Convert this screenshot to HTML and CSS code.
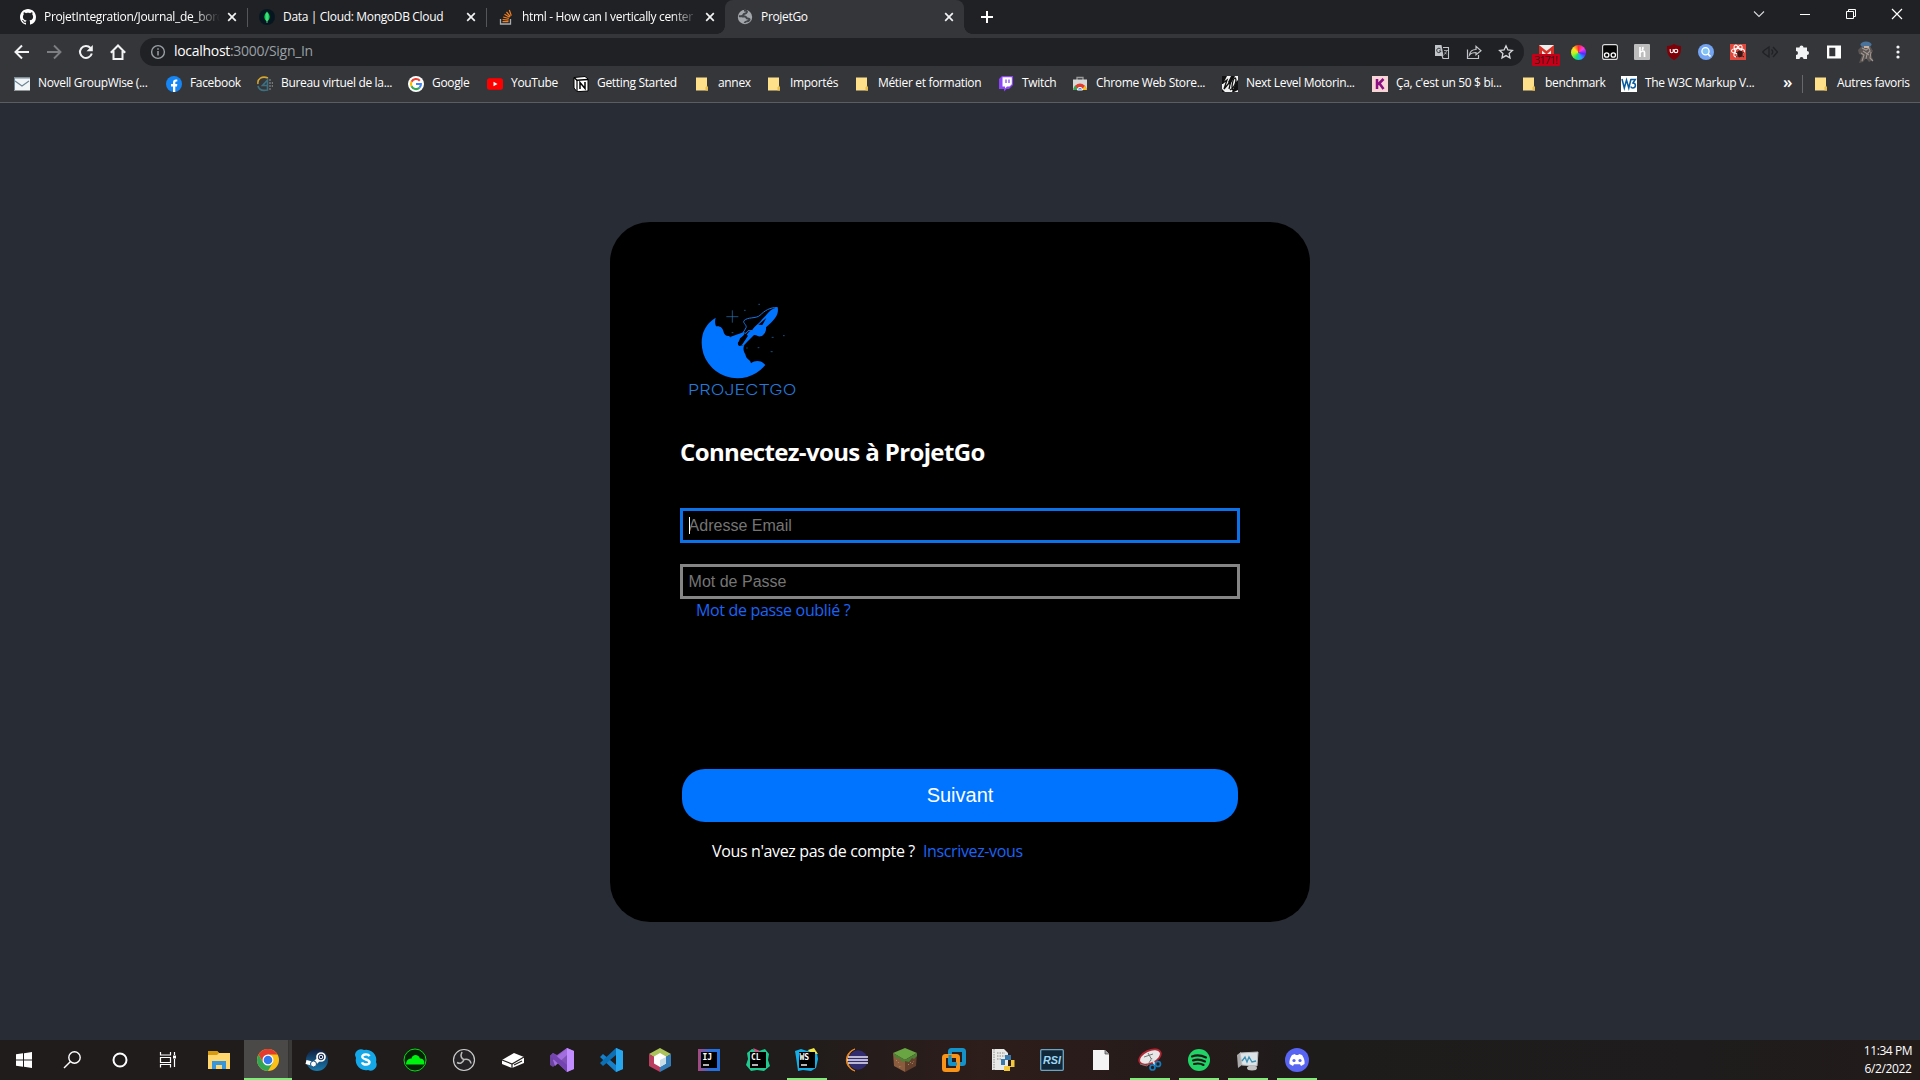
FILE: index.html
```html
<!DOCTYPE html>
<html lang="fr">
<head>
<meta charset="utf-8">
<title>ProjetGo</title>
<link rel="stylesheet" href="styles.css">
</head>
<body>
<svg class="defs" aria-hidden="true">
  <symbol id="close" viewBox="0 0 16 16"><path d="M4.2 4.2l7.6 7.6M11.800 4.200l-7.600 7.600" stroke="#f1f3f4" stroke-width="1.7"/></symbol>
  <symbol id="folder" viewBox="0 0 16 16"><path d="M2 1.500h11v9l1 1v3H2z" fill="#ffe08a"/><path d="M11.500 14.500v-3l1.500-2 1 2v3z" fill="#e8bd4c"/></symbol>
</svg>

<header class="browser">
  <div class="tabstrip">
    <div class="tab">
      <svg class="ico" viewBox="0 0 16 16"><path fill="#fff" d="M8 0C3.580 0 0 3.580 0 8c0 3.540 2.290 6.530 5.470 7.590.4.070.55-.17.55-.38 0-.19-.010-.82-.010-1.490-2.010.37-2.530-.49-2.690-.94-.090-.23-.48-.94-.82-1.130-.28-.15-.68-.52-.010-.53.63-.010 1.080.58 1.230.82.72 1.210 1.870.87 2.330.66.070-.52.28-.87.510-1.070-1.780-.2-3.640-.89-3.640-3.950 0-.87.31-1.590.82-2.150-.080-.2-.36-1.020.080-2.120 0 0 .67-.21 2.200.82.64-.18 1.320-.27 2-.27s1.360.090 2 .27c1.530-1.040 2.200-.82 2.200-.82.44 1.100.16 1.920.080 2.120.51.56.82 1.270.82 2.150 0 3.070-1.870 3.750-3.650 3.950.29.25.54.73.54 1.480 0 1.070-.010 1.930-.010 2.200 0 .21.15.46.55.38A8 8 0 0 0 16 8c0-4.420-3.580-8-8-8z"/></svg>
      <span class="tab-title fade">ProjetIntegration/Journal_de_bord</span><svg class="ico"><use href="#close"/></svg>
    </div>
    <div class="tab">
      <svg class="ico" viewBox="0 0 16 16"><circle cx="8" cy="8" r="8" fill="#061621"/><path d="M8 2.500c4 4 3 8 0 10-3-2-4-6 0-10z" fill="#10d35a"/><path d="M8 4v10" stroke="#9be8b4" stroke-width=".7"/></svg>
      <span class="tab-title">Data | Cloud: MongoDB Cloud</span><svg class="ico"><use href="#close"/></svg>
    </div>
    <div class="tab">
      <svg class="ico" viewBox="0 0 16 16"><path d="M2.500 10v5h10v-5" fill="none" stroke="#a9adb0" stroke-width="1.300"/><path d="M4.500 12.700h6M4.600 10.500l6 .6M5.200 8l5.600 1.500M6.500 5.300l5 3M8.500 3l3.800 4.500M11.300 1l2 5.600" stroke="#f48024" stroke-width="1.200"/></svg>
      <span class="tab-title fade">html - How can I vertically center</span><svg class="ico"><use href="#close"/></svg>
    </div>
    <div class="tab active">
      <svg class="ico" viewBox="0 0 16 16"><circle cx="8" cy="8" r="7.200" fill="#a3a6aa"/><path d="M7 1.500c5 0 3 3 0 3.500-1 1-1 1.500-2 2-1 .3-2 .3-3 0M5 7.500h3c1.500 0 1 2 2.500 2s3 .5 1.500 2-3.500 0-4.500 2.500" fill="none" stroke="#43464a" stroke-width="1.900"/></svg>
      <span class="tab-title">ProjetGo</span><svg class="ico"><use href="#close"/></svg>
    </div>
    <svg class="newtab" viewBox="0 0 16 16"><path d="M8 2v12M2 8h12" stroke="#fff" stroke-width="2"/></svg>
    <div class="winctl">
      <svg viewBox="0 0 16 16"><path d="M3 5.500l5 5 5-5" fill="none" stroke="#d8dadd" stroke-width="1.100"/></svg>
      <svg viewBox="0 0 16 16"><path d="M3 8.500h10" stroke="#fff"/></svg>
      <svg viewBox="0 0 16 16"><path d="M3.500 5.500h7v7h-7zM5.500 5.500v-2h7v7h-2" fill="none" stroke="#fff"/></svg>
      <svg viewBox="0 0 16 16"><path d="M3 3l10 10M13 3L3 13" stroke="#fff" stroke-width="1.200"/></svg>
    </div>
  </div>

  <div class="toolbar">
    <div class="nav">
      <svg viewBox="0 0 16 16"><path d="M15 8H2M8 1.500L1.500 8 8 14.500" fill="none" stroke="#f1f3f4" stroke-width="2"/></svg>
      <svg viewBox="0 0 16 16"><path d="M1 8h13M8 1.500L14.500 8 8 14.500" fill="none" stroke="#7c7e81" stroke-width="1.900"/></svg>
      <svg viewBox="0 0 16 16"><path d="M13.800 9.500A6 6 0 1 1 12.500 4" fill="none" stroke="#f1f3f4" stroke-width="2"/><path d="M14.800 1v6.300H8.500z" fill="#f1f3f4"/></svg>
      <svg viewBox="0 0 16 16"><path d="M.8 8.800L8 1.500l7.200 7.300M3.500 7v8h9V7" fill="none" stroke="#f1f3f4" stroke-width="2"/></svg>
    </div>
    <div class="omnibox">
      <svg class="ico" viewBox="0 0 16 16"><circle cx="8" cy="8" r="6.400" fill="none" stroke="#9aa0a6" stroke-width="1.400"/><path d="M8 7v4.500M8 4.300v1.500" stroke="#9aa0a6" stroke-width="1.500"/></svg>
      <span class="url"><b>localhost</b>:3000/Sign_In</span>
      <div class="omni-icons">
        <svg viewBox="0 0 16 16"><path d="M1 1h6.500l2 11H1z" fill="#c1c4c8"/><path d="M9 3.500h5.500v11H9l-1-3" fill="none" stroke="#c1c4c8" stroke-width="1.100"/><path d="M6.700 5.200A2.200 2.200 0 1 0 7 7H5" fill="none" stroke="#35363a"/><path d="M10 6.500h4M12.500 7c-.5 2-1.500 3-2.500 3.500M10.800 8.300l1.700 2" stroke="#c1c4c8" fill="none" stroke-width=".8"/></svg>
        <svg viewBox="0 0 16 16"><path d="M1.500 5.500v9h11V11M3.500 11c.5-4 3-5.500 6.500-5.500V2.300L15 6.800l-5 4V8.500c-3 0-5 .5-6.500 2.500z" fill="none" stroke="#c1c4c8" stroke-width="1.200"/></svg>
        <svg viewBox="0 0 16 16"><path d="M8 1.800l1.900 4.100 4.500.5-3.300 3 .9 4.500-4-2.300-4 2.300.9-4.500-3.300-3 4.500-.5z" fill="none" stroke="#d6d8db" stroke-width="1.300"/></svg>
      </div>
    </div>
    <div class="extensions">
      <svg class="gmail" viewBox="0 0 28 22"><path d="M7 1h15v10H7z" fill="#eee"/><path d="M7 11V1l7.500 6L22 1v10h-3V6.500l-4.500 4L10 6.500V11z" fill="#d93025"/><rect y="10" width="28" height="12" rx="1" fill="#c60018"/><text x="14" y="20" font-size="11" text-anchor="middle" textLength="24" fill="#3e1015">3171!</text></svg>
      <i class="wheel"></i>
      <svg viewBox="0 0 16 16"><rect x=".6" y=".6" width="14.800" height="14.800" rx="2" fill="#050505" stroke="#ddd" stroke-width="1.100"/><circle cx="4.700" cy="11" r="2.200" fill="none" stroke="#fff" stroke-width="1.300"/><circle cx="11.300" cy="11" r="2.200" fill="none" stroke="#fff" stroke-width="1.300"/></svg>
      <svg viewBox="0 0 16 16"><rect width="16" height="16" rx="1" fill="#bdbdbd"/><path d="M6 3v10M6 8.500c2.500-2 4.500-2 4.500 0V13M8.500 3c.8 1 .5 2-.5 3" fill="none" stroke="#fff" stroke-width="1.700"/></svg>
      <svg viewBox="0 0 16 16"><path d="M8 0c2 1.300 4 2 7 2 .3 7-1 11-7 14C2 13 .7 9 1 2c3 0 5-.7 7-2z" fill="#800008"/><path d="M4.200 5v2.200c0 2 3 2 3 0V5M10 5.200a1.800 1.700 0 1 1 0 3.400 1.800 1.700 0 0 1 0-3.400z" fill="none" stroke="#fff" stroke-width="1.100"/></svg>
      <svg viewBox="0 0 16 16"><circle cx="8" cy="8" r="8" fill="#73a5f4"/><circle cx="7.500" cy="7.200" r="3.600" fill="#82c5f5" stroke="#fff" stroke-width="1.300"/><path d="M10 10l2.500 2.500" stroke="#fff" stroke-width="1.700"/></svg>
      <svg viewBox="0 0 16 16"><rect width="16" height="16" fill="#e0493c"/><g fill="none" stroke="#fff" stroke-width="1.100"><ellipse cx="8" cy="7" rx="6.500" ry="2.500"/><ellipse cx="8" cy="7" rx="6.500" ry="2.500" transform="rotate(60 8 7)"/><ellipse cx="8" cy="7" rx="6.500" ry="2.500" transform="rotate(120 8 7)"/></g><ellipse cx="10" cy="10" rx="2.800" ry="3.400" fill="#3a1513"/><path d="M6 8l8 5M14 8l-8 5" stroke="#3a1513"/></svg>
      <svg viewBox="0 0 16 16"><path d="M.7 8l2-2L7 3v10L2.700 10z" fill="none" stroke="#202124" stroke-width="1.300"/><path d="M9.500 5.500c1.500 1.500 1.500 3.500 0 5M11 3l4.500 5-4.500 5" fill="none" stroke="#202124" stroke-width="1.300"/></svg>
      <svg viewBox="0 0 16 16"><path d="M2 3.500h3.500a2 2 0 1 1 4 0H13V7a2 2 0 1 1 0 4v4H9.500a2 2 0 0 0-4 0H2v-4a2 2 0 0 0 0-4z" fill="#f1f3f4"/></svg>
      <svg viewBox="0 0 16 16"><path d="M1 1.500h14v13H1zM3.300 3.800v8.400h6V3.800z" fill="#fff" fill-rule="evenodd"/></svg>
      <svg class="avatar" viewBox="0 0 20 22"><path d="M2 9l4-4h8l3 5-2 3 2 6-4 2-3-4-3 4-4 1 3-8-3-1z" fill="#5a5553"/><ellipse cx="10" cy="3.500" rx="5.500" ry="3" fill="#49739b"/><path d="M6 7l4 2 3-2 1 3-3 3-1 5M5 12l3 2-2 6M15 11l-1 6 3 3M7 10l6 4" stroke="#a29791" fill="none" stroke-width="1.100"/><path d="M8 5h5v2H8z" fill="#c7b0a0"/></svg>
      <svg viewBox="0 0 16 16"><g fill="#f1f3f4"><circle cx="8" cy="3" r="1.600"/><circle cx="8" cy="8" r="1.600"/><circle cx="8" cy="13" r="1.600"/></g></svg>
    </div>
  </div>

  <nav class="bookmarks">
    <a><svg viewBox="0 0 16 16"><rect y="1.500" width="16" height="13" fill="#f2f5f7"/><path d="M1 5l7 5 7-5" fill="none" stroke="#6c8797" stroke-width="1.200"/><path d="M0 2h16M.5 2v12" stroke="#6c8797"/></svg><span>Novell GroupWise (...</span></a>
    <a><svg viewBox="0 0 16 16"><circle cx="8" cy="8" r="8" fill="#1686f5"/><path d="M7 16v-5.500H5V8h2V6.500C7 4 8.500 3 11.300 3.500v2C9.500 5.300 9.300 5.800 9.300 7v1h2L11 10.500H9.300V16z" fill="#fff"/></svg><span>Facebook</span></a>
    <a><svg viewBox="0 0 16 16"><path d="M1 8C0 3 5-.5 11 2" fill="none" stroke="#d6a72e" stroke-width="1.500"/><path d="M1 10c1 4 5 5 9.500 4V4L5.500 9.500H10" fill="none" stroke="#3d7182" stroke-width="1.600"/><path d="M13 3v11M15.500 6v5" stroke="#777" stroke-width="1.400" stroke-dasharray="2 1"/></svg><span>Bureau virtuel de la...</span></a>
    <a><svg viewBox="0 0 16 16"><circle cx="8" cy="8" r="8" fill="#fff"/><g fill="none" stroke-width="2.100"><path d="M11.800 4.700A5 5 0 0 0 3.500 5.800" stroke="#ea4335"/><path d="M3.500 5.800a5 5 0 0 0 0 4.500" stroke="#fbbc05"/><path d="M3.500 10.300a5 5 0 0 0 7.900 1.400" stroke="#34a853"/><path d="M11.400 11.700C12.500 10.700 13 9.300 12.900 8H8" stroke="#4285f4"/></g></svg><span>Google</span></a>
    <a><svg viewBox="0 0 16 16"><rect y="2.300" width="16" height="11.500" rx="2.500" fill="#f00"/><path d="M6.500 5.700v4.600L10.500 8z" fill="#fff"/></svg><span>YouTube</span></a>
    <a><svg viewBox="0 0 16 16"><path d="M1 1.500L12 .5l3 2.500v12l-11 .7L1 12z" fill="#fff" stroke="#000"/><path d="M1 1.500l3 2.700 11-.7" stroke="#000" stroke-width="1.400" fill="none"/><path d="M4 4v11.500" stroke="#000" stroke-width="1.200"/><path d="M7 13V6.500l5 6V6" fill="none" stroke="#000" stroke-width="1.500"/></svg><span>Getting Started</span></a>
    <a><svg><use href="#folder"/></svg><span>annex</span></a>
    <a><svg><use href="#folder"/></svg><span>Importés</span></a>
    <a><svg><use href="#folder"/></svg><span>Métier et formation</span></a>
    <a><svg viewBox="0 0 16 16"><path d="M4 0h11v9l-4 4H8.500L6 15.500V13H1V3z" fill="#8b45f7"/><path d="M4.500 1.200h9.300v7L11.500 10.500H9l-2 2v-2H4.500z" fill="#fff"/><path d="M8 3.500V7M11 3.500V7" stroke="#8b45f7" stroke-width="1.300"/></svg><span>Twitch</span></a>
    <a><svg viewBox="0 0 16 16"><path d="M5 4V1.500h6V4" fill="none" stroke="#9a9a9a" stroke-width="1.300"/><path d="M1 3.500h14v10.500H1z" fill="#d8d8d8"/><path d="M1.500 14a6.500 6.500 0 0 1 13 0z" fill="#e33b2e"/><path d="M1.500 14c0-2 .7-3.500 2-4.500l3 4.500z" fill="#31a552"/><path d="M14.500 14c0-2-1-3.500-2-4l-2.500 4z" fill="#fbc116"/><path d="M5.400 14a2.600 2.600 0 0 1 5.200 0z" fill="#4587ed" stroke="#fff"/></svg><span>Chrome Web Store...</span></a>
    <a><svg viewBox="0 0 16 16"><rect width="16" height="16" fill="#f2f2f2"/><path d="M0 0h5L1 8H0zM9 0h4L8 9 6 6zM14 6l2-2v10l-4 2h-2zM0 13l3 3H0z" fill="#111"/><path d="M1 7l4-3-3 9 5-6c2-2 1 2 0 6M8 14c6-3 7-12 5-12s-5 13-1 12l3-2" stroke="#111" fill="none" stroke-width="1.300"/></svg><span>Next Level Motorin...</span></a>
    <a><svg viewBox="0 0 16 16"><rect width="16" height="16" fill="#f7d4d5"/><path d="M5 3v10M11.500 3L6 8.500M7.500 7.500l4 5.500" stroke="#8b0f82" stroke-width="2.500"/></svg><span>Ça, c'est un 50 $ bi...</span></a>
    <a><svg><use href="#folder"/></svg><span>benchmark</span></a>
    <a><svg viewBox="0 0 16 16"><rect width="16" height="16" fill="#fff"/><path d="M1 3l2.300 9L5.500 4l2.300 8L10 3M10 3.500h4.300L12 7c3.500.5 3 5-.3 5-1 0-1.500-.5-2-1.500" fill="none" stroke="#075a9d" stroke-width="1.500"/></svg><span>The W3C Markup V...</span></a>
    <div class="more">»</div>
    <a class="other"><svg><use href="#folder"/></svg><span>Autres favoris</span></a>
  </nav>
</header>

<main class="page">
  <form class="card">
    <svg class="logo" viewBox="0 0 390 330">
      <path fill="#0073ff" d="M107 68Q65 94 65 143A107.500 107.500 0 0 0 256 210C247 197 226 194 213 205C210 192 199 195 196 178C191 170 188 160 193 150L178 153Q172 149 174 141L180 126C166 133 154 131 147 123C139 124 133 120 131 112C129 98 120 92 108 94Q103 84 107 68Z"/>
      <path fill="#0073ff" d="M293 37C297 55 287 70 273 83L258 97C260 112 249 126 235 124Q226 119 222 120L204 138L192 151L183 151L198 130C199 117 207 108 217 106C225 91 239 86 246 73C262 60 270 40 293 37Z"/>
      <path fill="#0073ff" d="M150 126L190 112L193 118L172 145Z"/>
      <path fill="none" stroke="#1675e8" stroke-width="3" d="M292 38C270 36 253 48 240 61C227 72 203 65 192 77C187 86 205 90 196 102L189 113L198 115L204 107L216 107L235 88"/>
      <path fill="#000" d="M180 130l17-12 7 4-18 27-12 2zM235 89l24-20-12 21z"/>
      <g stroke="#2778bd" stroke-width="2"><path d="M157 46v37M139 65h36"/><path d="M155 113h5M233 158h5M272 170h6M275 127h6M309 122h5M249 113h5M192 46h5M235 28h5M260 77h4M199 159h4"/></g>
      <text x="24" y="299" font-size="42" textLength="325" lengthAdjust="spacingAndGlyphs">PROJECTGO</text>
    </svg>
    <h1>Connectez-vous à ProjetGo</h1>
    <div class="field focused"><input type="text" placeholder="Adresse Email"><i class="caret"></i></div>
    <div class="field"><input type="password" placeholder="Mot de Passe"></div>
    <a class="forgot">Mot de passe oublié ?</a>
    <button type="button">Suivant</button>
    <p class="signup"><span>Vous n'avez pas de compte ?</span><a>Inscrivez-vous</a></p>
  </form>
</main>

<footer class="taskbar">
  <div class="system">
    <div><svg viewBox="0 0 24 24"><path d="M4 6.300l7-1v6.200H4zM12 5.200L20 4v7.500h-8zM4 12.500h7v6.200l-7-1zM12 12.500h8V20l-8-1.200z" fill="#fff"/></svg></div>
    <div><svg viewBox="0 0 24 24"><circle cx="14.500" cy="9.500" r="5.700" fill="none" stroke="#fff" stroke-width="1.400"/><path d="M10.500 13.500L4 20" stroke="#fff" stroke-width="1.500"/></svg></div>
    <div><svg viewBox="0 0 24 24"><circle cx="12" cy="12" r="6.500" fill="none" stroke="#fff" stroke-width="2"/></svg></div>
    <div><svg viewBox="0 0 24 24"><path d="M4.500 4v3h10V4M4.500 19.500v-3h10v3M4.500 9.500h10v5h-10zM18.500 4v3M18.500 11v8" fill="none" stroke="#fff" stroke-width="1.200"/><path d="M17 7.500h3v3h-3z" fill="#fff"/></svg></div>
  </div>
  <div class="apps">
    <div><svg viewBox="0 0 24 24"><path d="M1 3h9l2 2h11v16H1z" fill="#ffd76e"/><path d="M1 3h9l2 2-2 2H1z" fill="#d79b12"/><path d="M5 13h14v8h-4v-4H9v4H5z" fill="#3795dc"/></svg></div>
    <div class="current"><svg viewBox="0 0 24 24"><circle cx="12" cy="12" r="11" fill="#fbc116"/><path d="M2.500 6.500A11 11 0 0 1 21.500 6.500H12L7.200 14.700z" fill="#e33b2e"/><path d="M2.500 6.500A11 11 0 0 0 12 23l4.800-8.200H7.200z" fill="#31a552"/><circle cx="12" cy="12" r="5.500" fill="#fff"/><circle cx="12" cy="12" r="4.300" fill="#3278ed"/></svg></div>
    <div><svg viewBox="0 0 24 24"><defs><linearGradient id="steam" x2="0" y2="1"><stop stop-color="#111d3d"/><stop offset="1" stop-color="#197bae"/></linearGradient></defs><circle cx="12" cy="12" r="11" fill="url(#steam)"/><path d="M1 14l8 2 6-6" fill="none" stroke="#fff" stroke-width="4"/><circle cx="16" cy="9" r="4" fill="#15274a" stroke="#fff" stroke-width="1.700"/><circle cx="16" cy="9" r="1.800" fill="none" stroke="#fff"/><circle cx="8.500" cy="16" r="3" fill="#fff" stroke="#1a4e78"/></svg></div>
    <div><svg viewBox="0 0 24 24"><path d="M1 7a6 6 0 0 1 9-5 10 10 0 0 1 12 12 6 6 0 0 1-8 8A10 10 0 0 1 2 10z" fill="#15a8e8"/><path d="M15.500 8.200C14 5.500 8 6 8.300 9c.3 3 7.400 2 7.200 5.300-.2 3-6.500 3-7.500 0" fill="none" stroke="#fff" stroke-width="2.400"/></svg></div>
    <div><svg viewBox="0 0 24 24"><circle cx="12" cy="12" r="11" fill="#082208" stroke="#00df10"/><path d="M3 16.500h18c1-4-1-6-4-6-2-5-8-4-8.500 0-3 0-5.500 2-5.500 6z" fill="#00f010"/></svg></div>
    <div><svg viewBox="0 0 24 24"><circle cx="12" cy="12" r="10.500" fill="#262326" stroke="#ccc" stroke-width="1.200"/><path d="M10 4c-2 4-.5 7 2 7.500 4-.8 6.500.5 7 4M12 11.500c-1.500 4-4 4.500-7 3" fill="none" stroke="#bbb" stroke-width="1.600"/></svg></div>
    <div><svg viewBox="0 0 24 24"><path d="M1 12L13 5l10 4v6l-12 5-10-4z" fill="#fff"/><path d="M1 12l10 4 12-7M11 16v4M13 17l8-4" stroke="#242020" fill="none" stroke-width="1.200"/></svg></div>
    <div><svg viewBox="0 0 24 24"><path d="M17 0l7 3v18l-7 3L0 8l3-3 4 2z" fill="#8052b6"/><path d="M5 9.500L17 0v6L9 12.500z" fill="#9a63d8"/><path d="M0 7v10l3 2 5-4-3.500-4z" fill="#6c44a1"/><path d="M3 12L17 1v6L5 18z" fill="#a26dde"/><path d="M3 5l14 12v7L0 8z" fill="#7444b1"/><path d="M17 0l7 3v18l-7 3z" fill="#c18dff"/></svg></div>
    <div><svg viewBox="0 0 24 24"><path d="M17 0l7 3v18l-7 3L1 9l3-3 13 11z" fill="#1681ca"/><path d="M17 0v7L4 18l-3-3z" fill="#0b70b5"/><path d="M17 0l7 3v18l-7 3z" fill="#28a6ed"/></svg></div>
    <div><svg viewBox="0 0 24 24"><path d="M12 0l11 6-11 7L1 6z" fill="#acc35c"/><path d="M1 6l11 6v12L1 18z" fill="#ba3e60"/><path d="M23 6l-11 6v12l11-6z" fill="#367db7"/><path d="M12 5l6 3.500v7L12 19l-6-3.500v-7z" fill="#fff"/><path d="M12 12l6-3v6.500L12 19z" fill="#cadee8"/></svg></div>
    <div><svg viewBox="0 0 24 24"><defs><linearGradient id="ij"><stop stop-color="#a9487c"/><stop offset=".6" stop-color="#2470df"/></linearGradient></defs><path d="M1 1h22v22H1z" fill="url(#ij)"/><path d="M4 4h16v16H4z"/><text x="5.500" y="12" class="jb">IJ</text><path d="M6 17h6" stroke="#fff" stroke-width="1.400"/></svg></div>
    <div><svg viewBox="0 0 24 24"><path d="M1 5l5-4 7 2 6-2 4 5-1 6 2 6-6 5-7-1-6 1-5-6 2-6z" fill="#20c990"/><path d="M7 0l7 3-4 2z" fill="#da4d89"/><path d="M4 4h16v16H4z"/><text x="5" y="12" class="jb">CL</text><path d="M6 17h6" stroke="#fff" stroke-width="1.400"/></svg></div>
    <div class="running"><svg viewBox="0 0 24 24"><path d="M0 3l6-2 6 2 5-2 5 4 1 6-2 9-5 3-8-1-5 1-2-14z" fill="#15afe5"/><path d="M13 2l6-2 4 6-7-1z" fill="#eee44b"/><path d="M4 4h16v16H4z"/><text x="4.500" y="12" class="jb">WS</text><path d="M6 17h6" stroke="#fff" stroke-width="1.400"/></svg></div>
    <div><svg viewBox="0 0 24 24"><path d="M11 1A11.300 11.300 0 0 0 11 23C1 18 1 6 11 1z" fill="#e98b28" stroke="#e98b28"/><circle cx="14" cy="12" r="9.700" fill="#312c70"/><path d="M4 9h20M3 12h21M4 15h20" stroke="#e9e5f3" stroke-width="1.600"/></svg></div>
    <div><svg viewBox="0 0 24 24"><path d="M12 0l12 5-12 7L0 5z" fill="#69a543"/><path d="M0 5l12 7v12L1 18z" fill="#8b5c3d"/><path d="M24 5l-12 7v12l11-6z" fill="#633f2c"/><path d="M0 5l12 7 12-7v3l-3 3-2-1-3 4-4-1-3 1-3-4-2 1-2-2z" fill="#4c8035"/><path d="M3 12l3 3M6 19l3-1M15 17l3-3M19 16l2-3" stroke="#a98666" stroke-dasharray="1.500"/></svg></div>
    <div><svg viewBox="0 0 24 24"><rect x="8" y="2" width="14" height="14" rx="1.500" fill="none" stroke="#1593c9" stroke-width="4"/><rect x="2" y="8" width="14" height="14" rx="1.500" fill="none" stroke="#f79318" stroke-width="4"/><path d="M8 7v9h7" fill="none" stroke="#1593c9" stroke-width="3"/></svg></div>
    <div><svg viewBox="0 0 24 24"><path d="M1 1h12l4 4v17H1z" fill="#e9e9e7"/><path d="M3 1v21M6 5h8M6 8h8M6 11h5" stroke="#888" stroke-dasharray="1.500 1"/><path d="M14 7h6v5h-6v5h-4v-6h4z" fill="#3878aa"/><path d="M20 12h3.500v7H19v4h-6v-5h7z" fill="#f4c83b"/></svg></div>
    <div><svg viewBox="0 0 24 24"><rect x=".7" y="1.700" width="22.600" height="20.600" rx="1" fill="#10273a" stroke="#6ba4c2" stroke-width="1.300"/><text x="3" y="15.700" class="rsi" textLength="18" lengthAdjust="spacingAndGlyphs">RSI</text></svg></div>
    <div><svg viewBox="0 0 24 24"><path d="M4 2h12l4 4v16H4z" fill="#f5f5f5"/><path d="M16 2v4h4" fill="#aaa" stroke="#444" stroke-width=".7"/></svg></div>
    <div class="running"><svg viewBox="0 0 24 24"><ellipse cx="12" cy="9" rx="11.500" ry="6.500" transform="rotate(-25 12 9)" fill="#e9e8e8" stroke="#b52632" stroke-width="1.700"/><path d="M2 16l7 2 5-8M10 5l5 9M6 9l9-3" stroke="#777" fill="none"/><path d="M14 11l3 6" stroke="#ddd" stroke-width="2"/><circle cx="14.500" cy="19.500" r="2.500" fill="none" stroke="#147bbd" stroke-width="1.700"/><circle cx="20" cy="16" r="2.500" fill="none" stroke="#147bbd" stroke-width="1.700"/></svg></div>
    <div class="running"><svg viewBox="0 0 24 24"><circle cx="12" cy="12" r="11" fill="#20d466"/><path d="M5 8.500c5-2 10-1 14 1M6 12.500c4-1.500 8-1 12 1M7 16c4-1 7-.5 9.500 1" fill="none" stroke="#181818" stroke-width="2.100" stroke-linecap="round"/></svg></div>
    <div class="running"><svg viewBox="0 0 24 24"><path d="M1 7l4-3 1 13-4 3z" fill="#aaa"/><path d="M4 5l18-1-1 14-15-1z" fill="#dce4e7" stroke="#bbb"/><path d="M6 13l3-4 2 5 2-5 3 5 4-1" fill="none" stroke="#3b91b6" stroke-width="1.300"/><ellipse cx="16" cy="20" rx="5" ry="2.500" fill="#c3c3c3"/></svg></div>
    <div class="running"><svg viewBox="0 0 24 24"><circle cx="12" cy="12" r="12" fill="#5865f2"/><path d="M7 7l3-1 .7 1h2.600l.7-1 3 1c2 3 3 6 2.500 9L16 18l-1-1.700H9L8 18l-3.500-2C4 13 5 10 7 7z" fill="#fff"/><circle cx="9" cy="12.500" r="1.600" fill="#5865f2"/><circle cx="15" cy="12.500" r="1.600" fill="#5865f2"/></svg></div>
  </div>
  <div class="clock"><span>11:34 PM</span><span>6/2/2022</span></div>
</footer>
</body>
</html>
```
FILE: styles.css
```css
* { box-sizing: border-box; }
body {
  margin: 0;
  width: 1920px;
  height: 1080px;
  overflow: hidden;
  display: flex;
  flex-direction: column;
  background: #282c34;
  color: #fff;
  font-family: "Open Sans", "Noto Sans", sans-serif;
  font-size: 12px;
}
svg { display: block; flex: none; }
.defs { width: 0; height: 0; position: absolute; }
.ico { width: 16px; height: 16px; }

/* Browser chrome */
.browser { height: 103px; background: #35363a; border-bottom: 1px solid #5c5d60; }
.tabstrip { height: 34px; background: #202124; display: flex; align-items: stretch; padding-left: 8px; }
.tab { width: 239px; display: flex; align-items: center; padding: 0 8px 0 12px; position: relative; }
.tab:nth-child(-n+2)::after { content: ""; position: absolute; right: -1px; top: 8px; width: 1px; height: 19px; background: #54565a; }
.tab-title { flex: 1; margin: 0 4px 0 8px; white-space: nowrap; overflow: hidden; letter-spacing: -.33px; line-height: 18px; }
.tab .ico:last-child { margin-right: -1px; }
.fade { mask-image: linear-gradient(to right, #000 85%, transparent 100%); }
.active { background: #35363a; border-radius: 8px 8px 0 0; }
.active::before, .active::after { content: ""; position: absolute; bottom: 0; width: 8px; height: 8px; }
.active::before { left: -8px; background: radial-gradient(circle at 0 0, transparent 7.5px, #35363a 8px); }
.active::after { right: -8px; background: radial-gradient(circle at 100% 0, transparent 7.5px, #35363a 8px); }
.newtab { width: 16px; height: 16px; margin: 9px 0 0 15px; }
.winctl { margin-left: auto; display: flex; gap: 30px; padding: 6px 15px 0 0; }
.winctl svg { width: 16px; height: 16px; }

.toolbar { height: 36px; display: flex; align-items: center; padding-left: 14px; }
.nav { display: flex; gap: 16px; width: 126px; }
.nav svg { width: 16px; height: 16px; }
.omnibox { width: 1384px; height: 28px; border-radius: 14px; background: #202124; display: flex; align-items: center; padding: 0 10px; }
.url { margin: 0 0 2px 8px; font-size: 14px; line-height: 20px; letter-spacing: -.3px; color: #9aa0a6; }
.url b { font-weight: 400; color: #fff; }
.omni-icons { margin-left: auto; display: flex; gap: 16px; }
.omni-icons svg { width: 16px; height: 16px; }
.extensions { display: grid; grid-template-columns: repeat(12, 32px); margin-left: 6px; align-items: center; justify-items: center; }
.extensions svg { width: 16px; height: 16px; }
.extensions .gmail { width: 28px; height: 22px; margin-top: 6px; }
.extensions .avatar { width: 20px; height: 22px; }
.wheel { width: 15px; height: 15px; border-radius: 50%; background: conic-gradient(#ff2b2b, #ff38e5, #512bff, #22a8ff, #16e36f, #b8f520, #ffdd24, #ff2b2b); }

.bookmarks {
  height: 28px;
  display: grid;
  grid-template-columns: 152px 91px 151px 79px 86px 121px 72px 88px 144px 74px 150px 150px 149px 100px 160px 22px 1fr;
  align-items: center;
  padding-left: 14px;
}
.bookmarks a { display: flex; align-items: center; gap: 8px; white-space: nowrap; letter-spacing: -.33px; }
.bookmarks span { line-height: 16px; padding-bottom: 2px; }
.bookmarks svg { width: 16px; height: 16px; }
.more { font-size: 17px; font-weight: 600; line-height: 14px; padding-left: 2px; height: 18px; border-right: 1px solid #66686c; }
.bookmarks .other { padding-left: 10px; }

/* Sign-in page */
.page { height: 937px; display: flex; justify-content: center; align-items: flex-start; padding-top: 119px; }
.card { width: 700px; height: 700px; border-radius: 40px; background: #000; padding: 73px 70px 0; display: flex; flex-direction: column; align-items: flex-start; }
.logo { width: 130px; height: 110px; fill: #2478d8; font-family: Inter, sans-serif; font-weight: 300; }
.card h1 { margin: 29px 0 0; font-size: 24px; line-height: 36px; font-weight: 700; letter-spacing: -.63px; white-space: nowrap; }
.field { width: 560px; height: 35px; margin-top: 21px; position: relative; border: 3px solid #858585; }
.focused { border-color: #0d72e8; margin-top: 38px; }
.field input { display: block; width: 100%; height: 29px; padding: 0 5.600px; border: 0; outline: 0; background: transparent; font: 16px "Liberation Sans", Arial, sans-serif; color: #fff; }
.field input::placeholder { color: #757575; opacity: 1; }
.caret { position: absolute; left: 6px; top: 6px; width: 1px; height: 17px; background: #fff; }
.forgot { margin: -1px 0 1px 16px; font-size: 16px; line-height: 24px; color: #1c64f5; letter-spacing: -.33px; }
.card button { width: 556px; height: 53px; margin: 146px 2px 0; border: 0; border-radius: 23px; background: #0073ff; color: #fff; font: 20px "Liberation Sans", Arial, sans-serif; }
.signup { margin: 17px 0 0 32px; display: flex; gap: 8px; font-size: 16px; line-height: 24px; letter-spacing: -.36px; white-space: nowrap; }
.signup a { color: #1c64f5; }

/* Taskbar */
.taskbar { height: 40px; display: flex; background: linear-gradient(90deg, #211c1c 0, #201c1b 800px, #2d1d1b 980px, #2b1c1a 1050px, #1e1b1b 1320px, #1e1c1c 1700px, #221b1a 1920px); }
.system { display: grid; grid-template-columns: repeat(4, 48px); width: 194px; }
.apps { display: grid; grid-template-columns: repeat(23, 49px); }
.system div, .apps div { display: grid; place-items: center; height: 40px; position: relative; }
.system svg, .apps svg { width: 24px; height: 24px; }
.apps .current { background: linear-gradient(90deg, #4b4848 44px, #302c2c 44px, #3b3838 45px); width: 48px; margin-left: 1px; }
.current::after, .running::after { content: ""; position: absolute; bottom: 0; left: 5px; width: 40px; height: 2px; background: #7cee75; }
.current::after { left: 0; width: 48px; }
.jb { font: 700 8px "DejaVu Sans Mono", monospace; fill: #fff; }
.rsi { font: italic 700 10px "Liberation Sans", sans-serif; fill: #9ed5f2; }
.clock { margin-left: auto; width: 64px; display: flex; flex-direction: column; align-items: center; padding-top: 2px; line-height: 18px; letter-spacing: -.4px; }
```
